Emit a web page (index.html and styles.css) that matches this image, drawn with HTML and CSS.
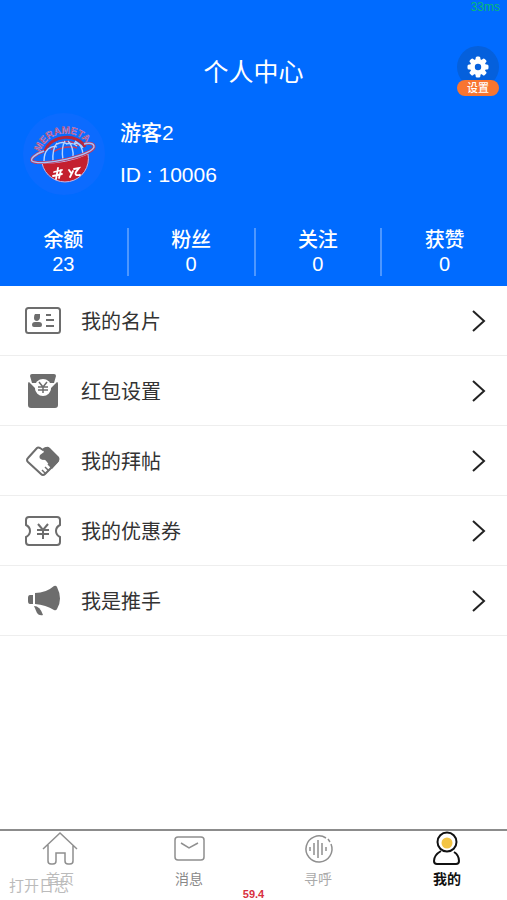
FILE: index.html
```html
<!DOCTYPE html>
<html lang="zh-CN">

<head>
    <meta charset="UTF-8" />
    <meta name="viewport" content="width=device-width, initial-scale=1.0" />
    <title>个人中心</title>
    <link rel="stylesheet" href="styles.css">
</head>

<body>
    <header class="header">
        <span class="ping">33ms</span>
        <h1>个人中心</h1>
        <button type="button" class="settings">
            <span class="settings-icon">
                <svg width="22" height="22" viewBox="-11 -11 22 22" fill="#fff">
                    <rect x="-2.4" y="-10.5" width="4.8" height="21" rx="1.5" />
                    <rect x="-2.4" y="-10.5" width="4.8" height="21" rx="1.5" transform="rotate(45)" />
                    <rect x="-2.4" y="-10.5" width="4.8" height="21" rx="1.5" transform="rotate(90)" />
                    <rect x="-2.4" y="-10.5" width="4.8" height="21" rx="1.5" transform="rotate(135)" />
                    <circle r="8" />
                    <circle r="3.2" fill="#0560dc" />
                </svg>
            </span>
            <span class="settings-label">设置</span>
        </button>

        <div class="profile">
            <svg class="avatar" width="84" height="84" viewBox="0 0 84 84">
                <circle cx="42" cy="42" r="41" fill="#0b6bff" />
                <path d="M20 51Q44 52 66 42A23 23 0 1 1 20 51z" fill="#c4202f" stroke="#c9b5e4" />
                <path d="M23 39C29 22 56 21 63 35" fill="none" stroke="#b8273c" stroke-width="3" />
                <path d="M29 38C35 28 50 27 57 34M31 40q12-7 24-4" fill="none" stroke="#c43a5e" stroke-width="1.5" />
                <path d="M22 49q0-8 4-12M31 50q-1-13 4-19M41 48q-2-13 2-19M51 46q1-11-5-17M61 42q-1-9-8-13M26 37q5-4 9-2M35 32q6-3 10 0M44 32q7-2 11 2M52 31q6 0 9 5" fill="none" stroke="#b4d4ff" stroke-width="1.4" />
                <path d="M22 39C13 42 8 47 10 49C18 55 74 43 72 34C71 31 66 31 62 32" fill="none" stroke="#c43a5e" stroke-width="3" />
                <path d="M22 39C13 42 8 47 10 49C18 55 74 43 72 34C71 31 66 31 62 32" fill="none" stroke="#9fc6ff" stroke-width="1.4" />
                <path id="arc" d="M18 40A27 27 0 0 1 65 32" fill="none" />
                <text class="logo-name"><textPath href="#arc">MERAMETA</textPath></text>
                <path d="M32 60l8-2M36 56l-2 11M31 64l9-2M39 58l-2 8M47 58l2 3M48 65l3-6M52 57l5-1l-3 4q-2 4 4 3" fill="none" stroke="#fff" stroke-width="1.8" stroke-linecap="round" />
            </svg>
            <div class="profile-text">
                <div>游客2</div>
                <div>ID : 10006</div>
            </div>
        </div>

        <div class="stats">
            <div class="stat"><span>余额</span><span>23</span></div>
            <div class="stat"><span>粉丝</span><span>0</span></div>
            <div class="stat"><span>关注</span><span>0</span></div>
            <div class="stat"><span>获赞</span><span>0</span></div>
        </div>
    </header>

    <main class="menu">
        <a class="menu-item" href="#">
            <svg class="menu-icon" viewBox="0 0 36 36">
                <rect class="line" x="1" y="5" width="34" height="25" rx="2.5" />
                <path d="M10 11h5v3q0 3-3 4q-3 0-3-3q0-3 1-4zM7 22q0-3 3-3h4q3 0 3 3q0 2-2 2H9q-2 0-2-2z" />
                <path class="line" d="M21 12h5M21 17h8M21 23h8" />
            </svg>
            <span>我的名片</span>
            <svg class="arrow" viewBox="0 0 14 22"><path d="M1 1l11 10L1 21" /></svg>
        </a>
        <a class="menu-item" href="#">
            <svg class="menu-icon" viewBox="0 0 36 36">
                <path d="M7 1h22q2 0 2 2l-2 7h-4a9 9 0 0 0-14 0H7L5 3q0-2 2-2z" />
                <path d="M4 9l6 6a8 8 0 0 0 16 0l6-6q1 0 1 2v21q0 3-3 3H6q-3 0-3-3V11q0-2 1-2z" />
                <circle cx="18" cy="14" r="8" fill="#fff" />
                <path class="yen" d="M14 9l4 5l4-5M13 14h10M13 17h10M18 14v6" />
            </svg>
            <span>红包设置</span>
            <svg class="arrow" viewBox="0 0 14 22"><path d="M1 1l11 10L1 21" /></svg>
        </a>
        <a class="menu-item" href="#">
            <svg class="menu-icon" viewBox="0 0 36 36">
                <path class="line" d="M18 7l-3-2q-2-1-3 0L3 15q-2 2 0 4l13 12q2 2 4 0l12-12q2-2 0-4l-9-9q-3-2-5 1z" />
                <path d="M18 6q4-4 7-1l9 9q1 2 0 4l-7 8l-5-7q-2-3-4-2q-5-1-3-5l4-3z" />
                <path class="yen" d="M27 25l-4-4M24 28l-4-4M21 31l-4-4" />
            </svg>
            <span>我的拜帖</span>
            <svg class="arrow" viewBox="0 0 14 22"><path d="M1 1l11 10L1 21" /></svg>
        </a>
        <a class="menu-item" href="#">
            <svg class="menu-icon" viewBox="0 0 36 36">
                <path class="line" d="M4 4h28q3 0 3 3v5q-4 2-4 6t4 6v5q0 3-3 3H4q-3 0-3-3v-5q4-2 4-6t-4-6V7q0-3 3-3z" />
                <path class="line" d="M13 11l5 6l5-6M12 17h12M12 21h12M18 17v9" />
            </svg>
            <span>我的优惠券</span>
            <svg class="arrow" viewBox="0 0 14 22"><path d="M1 1l11 10L1 21" /></svg>
        </a>
        <a class="menu-item" href="#">
            <svg class="menu-icon" viewBox="0 0 36 36">
                <path d="M10 10q11 0 19-7q2-1 3 1q6 12 0 22q-1 2-3 1q-8-5-19-6zM5 12h3v9H5q-2 0-2-3v-3q0-3 2-3z" />
                <path d="M9 23q6 0 9 9q-4 1-6-2z" />
            </svg>
            <span>我是推手</span>
            <svg class="arrow" viewBox="0 0 14 22"><path d="M1 1l11 10L1 21" /></svg>
        </a>
    </main>

    <nav class="tabbar">
        <a class="tab" href="#">
            <svg viewBox="0 0 36 34">
                <path d="M1 18L18 2l17 16M6 14v16q0 3 3 3h2q3 0 3-3v-8h9v8q0 3 3 3h2q3 0 3-3V14" />
            </svg>
            <span class="tab-home">首页</span>
        </a>
        <a class="tab" href="#">
            <svg viewBox="0 0 36 34">
                <rect x="4" y="6" width="29" height="23" rx="3" />
                <path d="M10 12l8 5l9-5" />
            </svg>
            <span>消息</span>
        </a>
        <a class="tab tab-light" href="#">
            <svg viewBox="0 0 36 34">
                <path d="M31 13A13 13 0 1 1 26 7M28 8l2 3M18 9v18M14 12v12M22 12v12M10 16v4M26 16v4" />
            </svg>
            <span>寻呼</span>
        </a>
        <a class="tab active" href="#">
            <svg viewBox="0 0 36 34">
                <circle cx="18" cy="11" r="9.5" />
                <circle class="dot" cx="18" cy="12" r="5.5" />
                <path d="M12 20q-7 4-7 10q0 3 3 3h19q3 0 3-3q0-6-5-9" />
            </svg>
            <span>我的</span>
        </a>
        <button type="button" class="log">打开日志</button>
        <span class="fps">59.4</span>
    </nav>
</body>

</html>
```
FILE: styles.css
```css
* {
    box-sizing: border-box;
}

body {
    margin: 0;
    min-height: 100vh;
    display: flex;
    flex-direction: column;
    font-family: "Liberation Sans", "Noto Sans CJK SC", sans-serif;
    font-size: 20px;
    color: #333;
    background: #fff;
}

a {
    color: inherit;
    text-decoration: none;
}

button {
    padding: 0;
    border: none;
    background: none;
    font-family: inherit;
    cursor: pointer;
}

/* Header */
.header {
    position: relative;
    padding-top: 54px;
    background: #006bff;
    color: #fff;
}

.ping {
    position: absolute;
    top: 0;
    right: 7px;
    font-size: 12px;
    line-height: 14px;
    color: #08b878;
}

h1 {
    margin: 0;
    font-size: 25px;
    font-weight: 400;
    line-height: 36px;
    text-align: center;
}

.settings {
    position: absolute;
    top: 46px;
    right: 8px;
    width: 42px;
    display: flex;
    flex-direction: column;
    align-items: center;
    color: #fff;
}

.settings-icon {
    width: 42px;
    height: 42px;
    display: flex;
    align-items: center;
    justify-content: center;
    border-radius: 50%;
    background: #0560dc;
}

.settings-label {
    width: 42px;
    margin-top: -8px;
    border-radius: 8px;
    background: #f87530;
    font-size: 11px;
    font-weight: 500;
    line-height: 16px;
}

.profile {
    display: flex;
    align-items: center;
    gap: 14px;
    height: 128px;
    padding: 0 22px;
}

.profile-text {
    font-size: 21px;
    font-weight: 500;
    line-height: 42px;
}

.logo-name {
    font-size: 10px;
    font-weight: 700;
    fill: #c43a5e;
    stroke: #a9a6e8;
    stroke-width: 0.4px;
}

.stats {
    display: flex;
    padding: 10px 0;
}

.stat {
    flex: 0 0 25%;
    display: flex;
    flex-direction: column;
    align-items: center;
    font-weight: 500;
    line-height: 24px;
}

.stat + .stat {
    border-left: 2px solid #4d97ff;
}

/* Menu */
.menu {
    flex: 1;
}

.menu-item {
    display: flex;
    align-items: center;
    height: 70px;
    padding: 0 21px 0 25px;
    border-bottom: 1px solid #eee;
}

.menu-item span {
    flex: 1;
    margin-left: 20px;
}

.menu-icon {
    width: 36px;
    height: 36px;
    fill: #6d6d6d;
}

.menu-icon .line {
    fill: none;
    stroke: #6d6d6d;
    stroke-width: 2;
}

.menu-icon .yen {
    fill: none;
    stroke: #6d6d6d;
    stroke-width: 1.5;
}

.arrow {
    width: 14px;
    height: 22px;
    fill: none;
    stroke: #222;
    stroke-width: 2;
}

/* Bottom tabs */
.tabbar {
    position: relative;
    display: flex;
    justify-content: space-between;
    height: 71px;
    padding: 0 42px;
    border-top: 2px solid #8c8c8c;
}

.tab {
    width: 36px;
    display: flex;
    flex-direction: column;
    align-items: center;
    font-size: 14px;
    line-height: 28px;
    color: #888;
}

.tab svg {
    width: 36px;
    height: 34px;
    fill: none;
    stroke: #8f8f8f;
    stroke-width: 1.5;
}

.tab-home {
    color: #bbb;
}

.tab-light {
    color: #aaa;
}

.tab.active {
    font-weight: 700;
    color: #111;
}

.tab.active svg {
    stroke: #111;
    stroke-width: 2;
}

.tab .dot {
    fill: #f3c443;
    stroke: none;
}

/* Debug overlay */
.log {
    position: absolute;
    left: 9px;
    bottom: 4px;
    font-size: 15px;
    line-height: 20px;
    color: #bbb;
}

.fps {
    position: absolute;
    right: 0;
    bottom: 0;
    left: 0;
    font-size: 11px;
    font-weight: 700;
    line-height: 12px;
    text-align: center;
    color: #d8313f;
}
```
